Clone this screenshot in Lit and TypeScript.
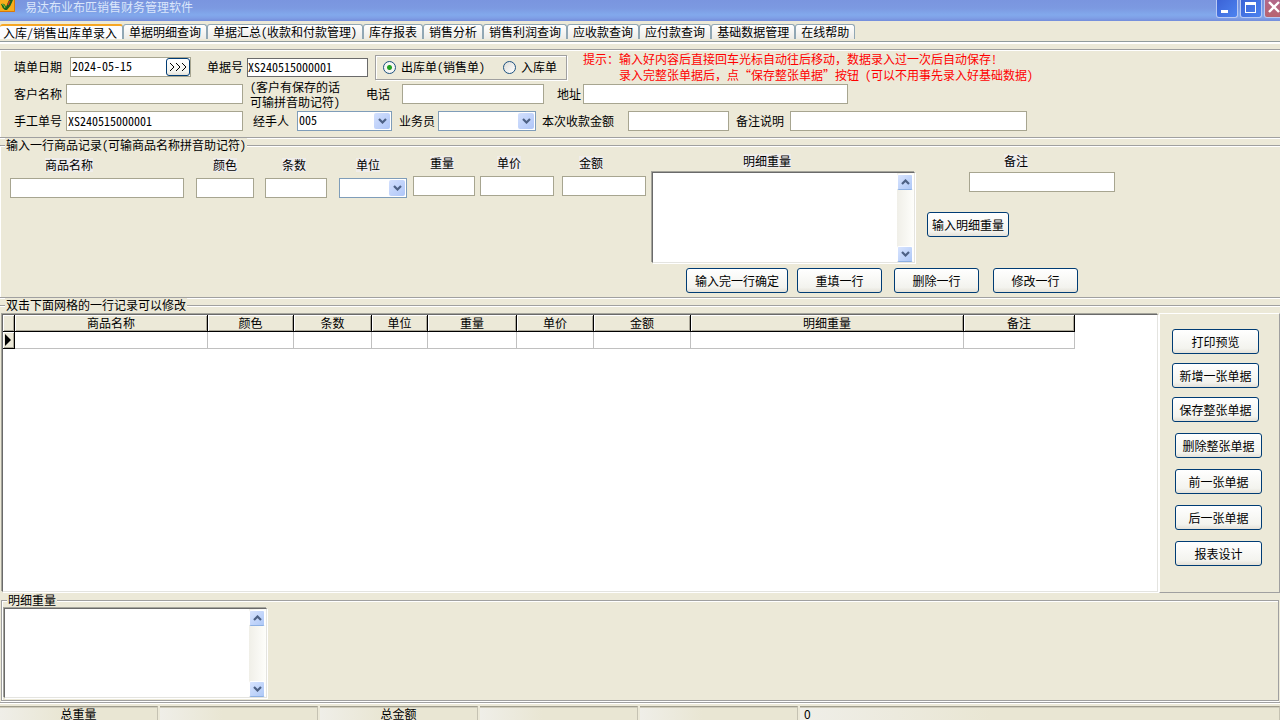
import { LitElement, html, css, svg } from "lit";
import { customElement, property, state } from "lit/decorators.js";
import { classMap } from "lit/directives/class-map.js";

const shared = css`
  * {
    box-sizing: border-box;
  }
  input,
  select,
  textarea,
  button {
    font: inherit;
    color: #000;
    margin: 0;
    border-radius: 0;
    outline: none;
  }
`;

const chevron = (up: boolean) => html`<svg
  class="chevron"
  viewBox="0 0 9 6"
  width="9"
  height="6"
  aria-hidden="true"
>
  ${up
    ? svg`<path d="M1 5 L4.5 1.5 L8 5" fill="none" stroke="#4d6185" stroke-width="2.2"/>`
    : svg`<path d="M1 1 L4.5 4.5 L8 1" fill="none" stroke="#4d6185" stroke-width="2.2"/>`}
</svg>`;

/** Multi-line text box with an XP style scroll bar. */
@customElement("memo-box")
export class MemoBox extends LitElement {
  @property() label = "";

  static styles = [
    shared,
    css`
      :host {
        display: flex;
        background: #fff;
        border: 1px solid;
        border-color: #6a6a6a #e4e4e0 #e4e4e0 #6a6a6a;
        box-shadow: -1px -1px 0 #a5a59c, 1px 1px 0 #fff;
      }
      .text {
        flex: 1;
        min-width: 0;
        border: 0;
        padding: 2px;
        resize: none;
        background: #fff;
        overflow: hidden;
      }
      .bar {
        width: 17px;
        display: flex;
        flex-direction: column;
        justify-content: space-between;
        padding: 1px 1px 0 0;
        background: linear-gradient(90deg, #f0efe8, #fefefb);
      }
      .arrow {
        height: 16px;
        padding: 0;
        border: 1px solid #fff;
        border-bottom-color: #8db0e3;
        border-radius: 2px;
        background: linear-gradient(135deg, #d8e4fe, #aec8f7);
        display: flex;
        align-items: center;
        justify-content: center;
      }
    `,
  ];

  render() {
    return html`
      <textarea class="text" aria-label=${this.label}></textarea>
      <div class="bar">
        <button class="arrow" aria-label="up">${chevron(true)}</button>
        <button class="arrow" aria-label="down">${chevron(false)}</button>
      </div>
    `;
  }
}

@customElement("app-root")
export class AppRoot extends LitElement {
  @state() private active = 0;

  private tabs = [
    "入库/销售出库单录入",
    "单据明细查询",
    "单据汇总(收款和付款管理)",
    "库存报表",
    "销售分析",
    "销售利润查询",
    "应收款查询",
    "应付款查询",
    "基础数据管理",
    "在线帮助",
  ];

  private columns = [
    ["商品名称", "c-name"],
    ["颜色", "c-color"],
    ["条数", "c-count"],
    ["单位", "c-unit"],
    ["重量", "c-weight"],
    ["单价", "c-price"],
    ["金额", "c-amount"],
    ["明细重量", "c-detail"],
    ["备注", "c-remark"],
  ];

  private totals = ["总重量", "", "总金额", "", ""];

  static styles = [
    shared,
    css`
      :host {
        display: flex;
        flex-direction: column;
        height: 100vh;
        overflow: hidden;
        background: #ece9d8;
        color: #000;
        font: 12px/14px "Noto Sans Mono CJK SC", "Noto Sans CJK SC", sans-serif;
        white-space: nowrap;
      }

      /* title bar */
      .title {
        flex: none;
        height: 21px;
        display: flex;
        align-items: flex-start;
        background: linear-gradient(#7a95df 0, #7c99e1 8px, #82a9ec 15px, #7f9fe6 18px, #748ddb 21px);
        color: #dae6fb;
        overflow: hidden;
      }
      .logo {
        flex: none;
        margin-right: 9px;
      }
      .caption {
        flex: 1;
        line-height: 14px;
      }
      .window-buttons {
        display: flex;
        gap: 2px;
        margin-right: -6px;
      }
      .wb {
        width: 22px;
        height: 18px;
        padding: 0;
        border: 1px solid #b9c9f4;
        border-top: 0;
        border-radius: 0 0 3px 3px;
        background: linear-gradient(135deg, #3c63d6, #4c83f0);
        display: block;
      }
      .wb.close {
        background: linear-gradient(#b2688a, #b8646f);
      }
      .wb svg {
        display: block;
      }

      /* tab strip */
      .tabs {
        flex: none;
        display: flex;
        padding-top: 3px;
        height: 21px;
        border-bottom: 1px solid #919b9c;
      }
      .tab {
        height: 15px;
        padding: 0 5px;
        border: 1px solid #91a7b4;
        border-bottom: 0;
        border-radius: 3px 3px 0 0;
        background: linear-gradient(#fff, #ecebe6);
        line-height: 14px;
      }
      .tab.on {
        border-top: 2px solid #f5a623;
        border-left: 0;
        padding: 0 5px 0 3px;
        line-height: 11px;
        background: #fcfcfe;
      }
      .strip {
        flex: none;
        height: 7px;
        border-top: 2px solid #fff;
      }

      /* etched boxes */
      .box {
        flex: none;
        min-width: 0;
        margin: 0;
        padding: 0;
        border: 0;
        border-top: 1px solid #a0a0a0;
        border-bottom: 1px solid #a0a0a0;
        box-shadow: inset 0 1px 0 #fff, inset 1px 0 0 #fff, 0 1px 0 #fff;
      }
      .box > legend {
        margin-left: 5px;
        padding: 0 1px;
        background: #ece9d8;
      }

      /* text boxes */
      .in {
        width: 100%;
        min-width: 0;
        height: 20px;
        padding: 0 2px;
        border: 1px solid #a7a590;
        background: #fff;
        line-height: 16px;
      }
      .in.filled {
        padding: 0 2px 2px 1px;
      }
      .in.dark {
        height: 19px;
        padding: 0 0 2px;
        border-color: #6a6a6a;
      }
      .combo {
        display: flex;
        position: relative;
      }
      .combo select {
        width: 100%;
        height: 20px;
        padding: 0 1px 2px;
        border: 1px solid #7f9db9;
        background: #fff;
        appearance: none;
      }
      .drop {
        position: absolute;
        right: 2px;
        top: 2px;
        width: 16px;
        height: 16px;
        border-radius: 2px;
        background: linear-gradient(135deg, #d3e0fd, #afc6f8);
        display: flex;
        align-items: center;
        justify-content: center;
        pointer-events: none;
      }

      /* document head */
      .head {
        padding-top: 1px;
      }
      .row {
        display: grid;
        align-items: center;
        grid-template-rows: 100%;
        padding-left: 14px;
      }
      .row1 {
        height: 32px;
        grid-template-columns: 56px 137px 40px 128px 208px 1fr;
      }
      .row2 {
        height: 22px;
        grid-template-columns: 52px 184px 116px 36px 155px 26px 265px;
      }
      .row3 {
        height: 32px;
        grid-template-columns: 52px 187px 44px 102px 39px 104px 86px 108px 54px 237px;
      }
      .w177 {
        width: 177px;
      }
      .w142 {
        width: 142px;
      }
      .w121 {
        width: 121px;
      }
      .w101 {
        width: 101px;
      }
      .w95 {
        width: 95px;
      }
      .w98 {
        width: 98px;
      }
      .date {
        width: 121px;
        height: 20px;
        display: flex;
        background: #fff;
        border: 1px solid #a7a590;
      }
      .date input {
        flex: 1;
        min-width: 0;
        border: 0;
        padding: 0 1px 2px;
      }
      .date .btn {
        width: 24px;
        height: 18px;
      }
      .kinds {
        width: 192px;
        height: 25px;
        display: flex;
        align-items: center;
        justify-content: space-between;
        padding: 0 9px 0 7px;
        border: 1px solid #a0a0a0;
        box-shadow: inset 1px 1px 0 #fff, 1px 1px 0 #fff;
      }
      .kind {
        display: flex;
        align-items: center;
        gap: 5px;
      }
      .kind input {
        appearance: none;
        width: 13px;
        height: 13px;
        border: 1px solid #1c5180;
        border-radius: 50%;
        background: linear-gradient(135deg, #dcdcd7, #fff);
      }
      .kind input:checked {
        background: radial-gradient(circle, #21a121 0, #21a121 2px, #f6f6f3 3px);
      }
      .hint {
        color: #f00;
        line-height: 16px;
        white-space: pre;
      }
      .note {
        align-self: center;
        line-height: 15px;
      }

      /* buttons */
      .btn {
        height: 25px;
        padding: 0;
        border: 1px solid #003c74;
        border-radius: 3px;
        background: linear-gradient(#fff, #f3f3ee 80%, #e4e1d8);
        text-align: center;
      }

      /* entry of one line */
      .entry {
        display: flex;
        align-items: flex-start;
        height: 145px;
        padding-left: 10px;
      }
      .group {
        display: grid;
        row-gap: 6px;
      }
      .group-a {
        padding-top: 6px;
        grid-template-columns: 186px 69px 74px 74px;
      }
      .group-b {
        padding-top: 4px;
        grid-template-columns: 67px 82px 89px;
      }
      .field {
        display: flex;
        flex-direction: column;
        gap: 6px;
      }
      .field.tight {
        gap: 4px;
      }
      .cap {
        align-self: flex-start;
        background: #efedeb;
        margin-left: 17px;
      }
      .cap.far {
        margin-left: 35px;
      }
      .cap.mid {
        margin-left: 92px;
      }
      .w174 {
        width: 174px;
      }
      .w58 {
        width: 58px;
      }
      .w62 {
        width: 62px;
      }
      .w68 {
        width: 68px;
      }
      .w74 {
        width: 74px;
      }
      .w84 {
        width: 84px;
      }
      .w146 {
        width: 146px;
      }
      .detail {
        display: flex;
        flex-direction: column;
        gap: 5px;
        padding-top: 2px;
      }
      .upper {
        display: flex;
        gap: 12px;
      }
      .detail memo-box {
        width: 263px;
        height: 91px;
        margin-left: 1px;
      }
      .aside {
        display: flex;
        flex-direction: column;
        align-items: flex-start;
        gap: 20px;
      }
      .aside .field {
        margin-left: 42px;
      }
      .weigh {
        width: 82px;
      }
      .actions {
        display: grid;
        grid-template-columns: 111px 97px 99px 85px;
        padding-left: 35px;
      }
      .w102 {
        width: 102px;
      }
      .w85 {
        width: 85px;
      }

      /* record grid */
      .records {
        flex: 1;
        display: flex;
        flex-direction: column;
        min-height: 0;
        border-bottom: 0;
        box-shadow: inset 0 1px 0 #fff;
      }
      .split {
        flex: 1;
        display: flex;
        min-height: 0;
        padding-top: 1px;
      }
      .sheet {
        flex: 1;
        min-width: 0;
        overflow: hidden;
        margin: 1px 1px 1px 2px;
        background: #fff;
        border: 1px solid;
        border-color: #6a6a6a #e4e4e0 #e4e4e0 #6a6a6a;
        box-shadow: -1px -1px 0 #a5a59c, 1px 1px 0 #fff;
      }
      table {
        border-collapse: separate;
        border-spacing: 0;
        table-layout: fixed;
        width: 1072px;
      }
      th {
        height: 17px;
        padding: 0;
        font-weight: normal;
        line-height: 14px;
        background: #ece9d8;
        border-right: 1px solid #000;
        border-bottom: 1px solid #000;
        box-shadow: inset 1px 1px 0 #fff, inset -1px -1px 0 #aca899;
      }
      td {
        height: 17px;
        padding: 0;
        border-right: 1px solid #c0c0c0;
        border-bottom: 1px solid #c0c0c0;
      }
      tbody th svg {
        display: block;
        margin: 0 auto;
      }
      .c-mark {
        width: 12px;
      }
      .c-name {
        width: 193px;
      }
      .c-color {
        width: 86px;
      }
      .c-count {
        width: 78px;
      }
      .c-unit {
        width: 56px;
      }
      .c-weight {
        width: 89px;
      }
      .c-price {
        width: 77px;
      }
      .c-amount {
        width: 97px;
      }
      .c-detail {
        width: 273px;
      }
      .c-remark {
        width: 111px;
      }
      .side {
        flex: none;
        width: 121px;
        padding: 15px 0 0 12px;
        border: 1px solid;
        border-color: #fff #a0a0a0 #a0a0a0 #fff;
        display: flex;
        flex-direction: column;
        gap: 11px;
      }
      .stack {
        display: grid;
        gap: 9px;
        grid-template-columns: 87px;
      }
      .stack.low {
        gap: 11px;
        padding-left: 3px;
      }

      /* lower detail */
      .weights {
        margin: 0 1px;
        padding-top: 1px;
        border-left: 1px solid #a0a0a0;
        border-right: 1px solid #a0a0a0;
      }
      .weights memo-box {
        width: 263px;
        height: 90px;
        margin: 0 0 2px 2px;
      }

      .status {
        flex: none;
        display: flex;
        gap: 2px;
        height: 18px;
        margin-top: 1px;
        padding-top: 3px;
        border-top: 1px solid #a0a0a0;
        box-shadow: inset 0 1px 0 #fff;
      }
      .cell {
        width: 158px;
        border-top: 1px solid #a09d8d;
        border-right: 1px solid #c5c2b2;
        background: linear-gradient(90deg, #efeee8, #e9e6d3 40%);
        box-shadow: inset 0 1px 0 #cfccbc;
        text-align: center;
        line-height: 13px;
      }
      .cell.last {
        flex: 1;
        padding-left: 4px;
        text-align: left;
        font-family: "Noto Sans CJK SC", sans-serif;
      }
    `,
  ];

  private combo(id: string, value: string, size: string) {
    return html`<span class="combo ${size}">
      <select id=${id}>
        <option>${value}</option>
      </select>
      <span class="drop">${chevron(false)}</span>
    </span>`;
  }

  private field(id: string, text: string, size: string, far = false) {
    return html`<div class="field">
      <label class=${classMap({ cap: true, far })} for=${id}>${text}</label>
      ${id === "unit"
        ? this.combo(id, "", size)
        : html`<input class="in ${size}" id=${id} />`}
    </div>`;
  }

  private renderTitle() {
    return html`<header class="title">
      <svg class="logo" width="16" height="13" viewBox="0 0 16 13" aria-hidden="true">
        <rect width="15" height="12" fill="#f7ae1c" />
        <path d="M0 11.5H14.5V0" fill="none" stroke="#d9780c" />
        <path d="M1 4 Q4 3 5 5 L6 7 Q8 2 9 0 L13 0 Q11 6 7 10 L5 10 Q2 8 1 4Z" fill="#17631f" />
        <path d="M2 4 Q4 4 5 8" fill="none" stroke="#8fce3c" />
        <path d="M8 5 Q9 2 10 1" fill="none" stroke="#d5331c" stroke-width="1.5" />
      </svg>
      <span class="caption">易达布业布匹销售财务管理软件</span>
      <div class="window-buttons">
        <button class="wb" aria-label="最小化">
          <svg width="20" height="17"><path d="M4 10h7v3h-7z" fill="#fff" /></svg>
        </button>
        <button class="wb" aria-label="最大化">
          <svg width="20" height="17">
            <path d="M4 2h11v11H4zM5 5v7h9V5z" fill="#fff" fill-rule="evenodd" />
          </svg>
        </button>
        <button class="wb close" aria-label="关闭">
          <svg width="20" height="17">
            <path d="M4 2L14 12M14 2L4 12" stroke="#fff" stroke-width="2.4" />
          </svg>
        </button>
      </div>
    </header>`;
  }

  private renderHead() {
    return html`<section class="box head">
      <div class="row row1">
        <label for="date">填单日期</label>
        <span class="date">
          <input id="date" value="2024-05-15" />
          <button class="btn" aria-label="选择日期">
            <svg width="19" height="10" viewBox="0 0 19 10">
              <path
                d="M1 1l4 4-4 4M7 1l4 4-4 4M13 1l4 4-4 4"
                fill="none"
                stroke="#000"
              />
            </svg>
          </button>
        </span>
        <label for="doc">单据号</label>
        <input class="in dark w121" id="doc" value="XS240515000001" />
        <div class="kinds" role="radiogroup">
          <label class="kind"><input type="radio" name="kind" checked />出库单(销售单)</label>
          <label class="kind"><input type="radio" name="kind" />入库单</label>
        </div>
        <div class="hint">提示：输入好内容后直接回车光标自动往后移动，数据录入过一次后自动保存!
　　　录入完整张单据后，点“保存整张单据”按钮 (可以不用事先录入好基础数据)</div>
      </div>
      <div class="row row2">
        <label for="client">客户名称</label>
        <input class="in w177" id="client" />
        <div class="note">(客户有保存的话<br />可输拼音助记符)</div>
        <label for="phone">电话</label>
        <input class="in w142" id="phone" />
        <label for="address">地址</label>
        <input class="in" id="address" />
      </div>
      <div class="row row3">
        <label for="manual">手工单号</label>
        <input class="in filled w177" id="manual" value="XS240515000001" />
        <label for="handler">经手人</label>
        ${this.combo("handler", "005", "w95")}
        <label for="sales">业务员</label>
        ${this.combo("sales", "", "w98")}
        <label for="paid">本次收款金额</label>
        <input class="in w101" id="paid" />
        <label for="memo">备注说明</label>
        <input class="in" id="memo" />
      </div>
    </section>`;
  }

  private renderEntry() {
    return html`<fieldset class="box">
      <legend>输入一行商品记录(可输商品名称拼音助记符)</legend>
      <div class="entry">
        <div class="group group-a">
          ${this.field("name", "商品名称", "w174", true)}
          ${this.field("color", "颜色", "w58")}
          ${this.field("count", "条数", "w62")}
          ${this.field("unit", "单位", "w68")}
        </div>
        <div class="group group-b">
          ${this.field("weight", "重量", "w62")}
          ${this.field("price", "单价", "w74")}
          ${this.field("amount", "金额", "w84")}
        </div>
        <div class="detail">
          <div class="upper">
            <div class="field tight">
              <span class="cap mid">明细重量</span>
              <memo-box label="明细重量"></memo-box>
            </div>
            <div class="aside">
              <div class="field tight">
                <label class="cap far" for="remark">备注</label>
                <input class="in w146" id="remark" />
              </div>
              <button class="btn weigh">输入明细重量</button>
            </div>
          </div>
          <div class="actions">
            <button class="btn w102">输入完一行确定</button>
            <button class="btn w85">重填一行</button>
            <button class="btn w85">删除一行</button>
            <button class="btn w85">修改一行</button>
          </div>
        </div>
      </div>
    </fieldset>`;
  }

  private renderRecords() {
    return html`<fieldset class="box records">
      <legend>双击下面网格的一行记录可以修改</legend>
      <div class="split">
        <div class="sheet">
          <table>
            <thead>
              <tr>
                <th class="c-mark"></th>
                ${this.columns.map(([text, size]) => html`<th class=${size}>${text}</th>`)}
              </tr>
            </thead>
            <tbody>
              <tr>
                <th>
                  <svg width="7" height="12"><path d="M0 0L6 6L0 12Z" fill="#000" /></svg>
                </th>
                ${this.columns.map(() => html`<td></td>`)}
              </tr>
            </tbody>
          </table>
        </div>
        <div class="side">
          <div class="stack">
            <button class="btn">打印预览</button>
            <button class="btn">新增一张单据</button>
            <button class="btn">保存整张单据</button>
          </div>
          <div class="stack low">
            <button class="btn">删除整张单据</button>
            <button class="btn">前一张单据</button>
            <button class="btn">后一张单据</button>
            <button class="btn">报表设计</button>
          </div>
        </div>
      </div>
    </fieldset>`;
  }

  render() {
    return html`
      ${this.renderTitle()}
      <nav class="tabs" role="tablist">
        ${this.tabs.map(
          (text, i) => html`<button
            role="tab"
            class=${classMap({ tab: true, on: i === this.active })}
            @click=${() => (this.active = i)}
          >${text}</button>`
        )}
      </nav>
      <div class="strip"></div>
      ${this.renderHead()} ${this.renderEntry()} ${this.renderRecords()}
      <fieldset class="box weights">
        <legend>明细重量</legend>
        <memo-box label="明细重量"></memo-box>
      </fieldset>
      <footer class="status">
        ${this.totals.map((text) => html`<div class="cell">${text}</div>`)}
        <div class="cell last">0</div>
      </footer>
    `;
  }
}
